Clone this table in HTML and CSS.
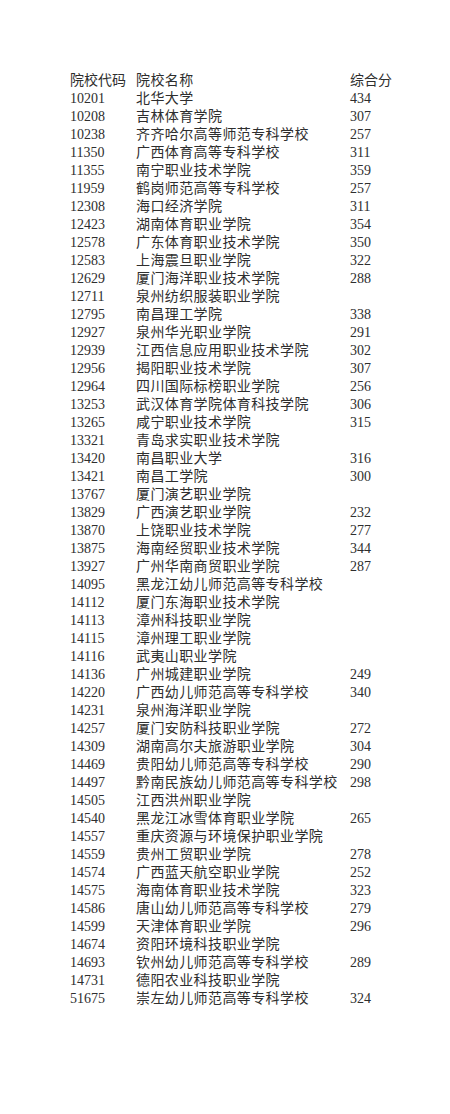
FILE: index.html
```html
<!DOCTYPE html>
<html lang="zh-CN">
<head>
<meta charset="utf-8">
<title>院校综合分</title>
<link rel="stylesheet" href="styles.css">
</head>
<body>
<div class="page">
  <div class="table">
    <div class="row head"><span class="code">院校代码</span><span class="name">院校名称</span><span class="score">综合分</span></div>
    <div class="row"><span class="code">10201</span><span class="name">北华大学</span><span class="score">434</span></div>
    <div class="row"><span class="code">10208</span><span class="name">吉林体育学院</span><span class="score">307</span></div>
    <div class="row"><span class="code">10238</span><span class="name">齐齐哈尔高等师范专科学校</span><span class="score">257</span></div>
    <div class="row"><span class="code">11350</span><span class="name">广西体育高等专科学校</span><span class="score">311</span></div>
    <div class="row"><span class="code">11355</span><span class="name">南宁职业技术学院</span><span class="score">359</span></div>
    <div class="row"><span class="code">11959</span><span class="name">鹤岗师范高等专科学校</span><span class="score">257</span></div>
    <div class="row"><span class="code">12308</span><span class="name">海口经济学院</span><span class="score">311</span></div>
    <div class="row"><span class="code">12423</span><span class="name">湖南体育职业学院</span><span class="score">354</span></div>
    <div class="row"><span class="code">12578</span><span class="name">广东体育职业技术学院</span><span class="score">350</span></div>
    <div class="row"><span class="code">12583</span><span class="name">上海震旦职业学院</span><span class="score">322</span></div>
    <div class="row"><span class="code">12629</span><span class="name">厦门海洋职业技术学院</span><span class="score">288</span></div>
    <div class="row"><span class="code">12711</span><span class="name">泉州纺织服装职业学院</span><span class="score"></span></div>
    <div class="row"><span class="code">12795</span><span class="name">南昌理工学院</span><span class="score">338</span></div>
    <div class="row"><span class="code">12927</span><span class="name">泉州华光职业学院</span><span class="score">291</span></div>
    <div class="row"><span class="code">12939</span><span class="name">江西信息应用职业技术学院</span><span class="score">302</span></div>
    <div class="row"><span class="code">12956</span><span class="name">揭阳职业技术学院</span><span class="score">307</span></div>
    <div class="row"><span class="code">12964</span><span class="name">四川国际标榜职业学院</span><span class="score">256</span></div>
    <div class="row"><span class="code">13253</span><span class="name">武汉体育学院体育科技学院</span><span class="score">306</span></div>
    <div class="row"><span class="code">13265</span><span class="name">咸宁职业技术学院</span><span class="score">315</span></div>
    <div class="row"><span class="code">13321</span><span class="name">青岛求实职业技术学院</span><span class="score"></span></div>
    <div class="row"><span class="code">13420</span><span class="name">南昌职业大学</span><span class="score">316</span></div>
    <div class="row"><span class="code">13421</span><span class="name">南昌工学院</span><span class="score">300</span></div>
    <div class="row"><span class="code">13767</span><span class="name">厦门演艺职业学院</span><span class="score"></span></div>
    <div class="row"><span class="code">13829</span><span class="name">广西演艺职业学院</span><span class="score">232</span></div>
    <div class="row"><span class="code">13870</span><span class="name">上饶职业技术学院</span><span class="score">277</span></div>
    <div class="row"><span class="code">13875</span><span class="name">海南经贸职业技术学院</span><span class="score">344</span></div>
    <div class="row"><span class="code">13927</span><span class="name">广州华南商贸职业学院</span><span class="score">287</span></div>
    <div class="row"><span class="code">14095</span><span class="name">黑龙江幼儿师范高等专科学校</span><span class="score"></span></div>
    <div class="row"><span class="code">14112</span><span class="name">厦门东海职业技术学院</span><span class="score"></span></div>
    <div class="row"><span class="code">14113</span><span class="name">漳州科技职业学院</span><span class="score"></span></div>
    <div class="row"><span class="code">14115</span><span class="name">漳州理工职业学院</span><span class="score"></span></div>
    <div class="row"><span class="code">14116</span><span class="name">武夷山职业学院</span><span class="score"></span></div>
    <div class="row"><span class="code">14136</span><span class="name">广州城建职业学院</span><span class="score">249</span></div>
    <div class="row"><span class="code">14220</span><span class="name">广西幼儿师范高等专科学校</span><span class="score">340</span></div>
    <div class="row"><span class="code">14231</span><span class="name">泉州海洋职业学院</span><span class="score"></span></div>
    <div class="row"><span class="code">14257</span><span class="name">厦门安防科技职业学院</span><span class="score">272</span></div>
    <div class="row"><span class="code">14309</span><span class="name">湖南高尔夫旅游职业学院</span><span class="score">304</span></div>
    <div class="row"><span class="code">14469</span><span class="name">贵阳幼儿师范高等专科学校</span><span class="score">290</span></div>
    <div class="row"><span class="code">14497</span><span class="name">黔南民族幼儿师范高等专科学校</span><span class="score">298</span></div>
    <div class="row"><span class="code">14505</span><span class="name">江西洪州职业学院</span><span class="score"></span></div>
    <div class="row"><span class="code">14540</span><span class="name">黑龙江冰雪体育职业学院</span><span class="score">265</span></div>
    <div class="row"><span class="code">14557</span><span class="name">重庆资源与环境保护职业学院</span><span class="score"></span></div>
    <div class="row"><span class="code">14559</span><span class="name">贵州工贸职业学院</span><span class="score">278</span></div>
    <div class="row"><span class="code">14574</span><span class="name">广西蓝天航空职业学院</span><span class="score">252</span></div>
    <div class="row"><span class="code">14575</span><span class="name">海南体育职业技术学院</span><span class="score">323</span></div>
    <div class="row"><span class="code">14586</span><span class="name">唐山幼儿师范高等专科学校</span><span class="score">279</span></div>
    <div class="row"><span class="code">14599</span><span class="name">天津体育职业学院</span><span class="score">296</span></div>
    <div class="row"><span class="code">14674</span><span class="name">资阳环境科技职业学院</span><span class="score"></span></div>
    <div class="row"><span class="code">14693</span><span class="name">钦州幼儿师范高等专科学校</span><span class="score">289</span></div>
    <div class="row"><span class="code">14731</span><span class="name">德阳农业科技职业学院</span><span class="score"></span></div>
    <div class="row"><span class="code">51675</span><span class="name">崇左幼儿师范高等专科学校</span><span class="score">324</span></div>
  </div>
</div>
</body>
</html>
```

FILE: styles.css
```css
html, body {
  margin: 0;
  padding: 0;
  background: #ffffff;
}

.page {
  width: 450px;
  height: 1114px;
  box-sizing: border-box;
  padding: 72px 0 0 70px;
  font-family: "Liberation Serif", "Noto Sans CJK SC", serif;
  font-size: 14px;
  color: #2e2e2e;
}

.table {
  display: flex;
  flex-direction: column;
}

.row {
  display: grid;
  grid-template-columns: 66px 214px auto;
  height: 18px;
  line-height: 18px;
  white-space: nowrap;
}

.name {
  letter-spacing: 0.4px;
}
```
